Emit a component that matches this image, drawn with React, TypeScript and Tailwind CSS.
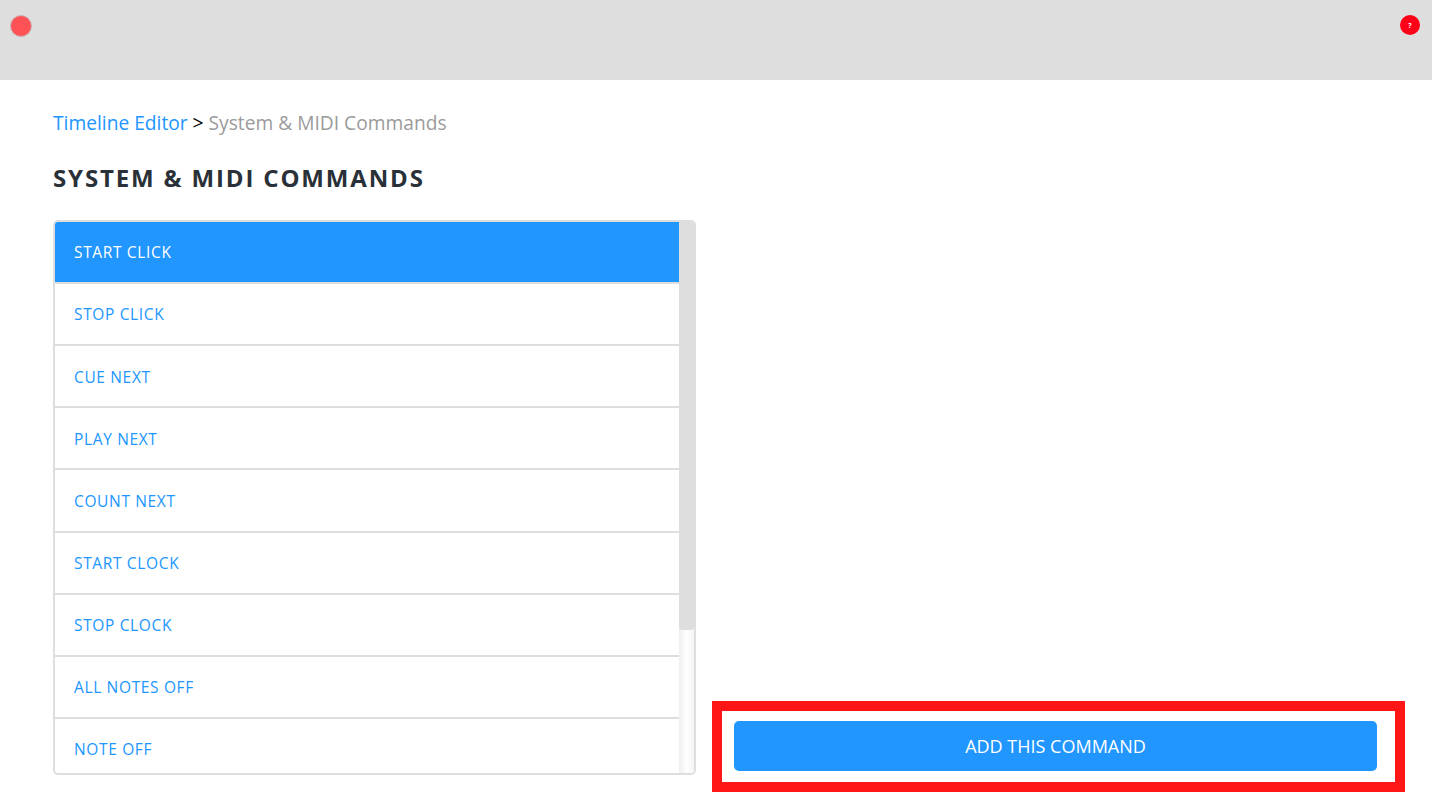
import React from 'react'

const commands = [
  'START CLICK',
  'STOP CLICK',
  'CUE NEXT',
  'PLAY NEXT',
  'COUNT NEXT',
  'START CLOCK',
  'STOP CLOCK',
  'ALL NOTES OFF',
  'NOTE OFF',
]

export default function App() {
  return (
    <div className="h-screen overflow-hidden bg-white font-['Open_Sans',sans-serif]">
      <div className="h-20 bg-[#dedede] flex items-start justify-between pl-[10px] pr-[12px]">
        <div className="mt-[15px] w-[22px] h-[22px] rounded-full bg-[#ff5257] border border-[#c9b4b4]" />
        <div className="mt-[15px] w-5 h-5 rounded-full bg-[#ff0018] flex items-center justify-center text-white text-[7px] font-bold leading-none">
          ?
        </div>
      </div>

      <div className="pl-[53px]">
        <div className="pt-[29px] h-[56px] text-[19.2px] leading-[27px] text-[#9b9b9b] whitespace-nowrap">
          <a className="text-[#2196ff]">Timeline Editor</a>
          <span className="text-black"> &gt; </span>
          System &amp; MIDI Commands
        </div>

        <h1 className="mt-[25px] h-[33px] text-[24px] leading-[33px] font-bold tracking-[1.85px] text-[#2a3038]">
          SYSTEM &amp; MIDI COMMANDS
        </h1>

        <div className="mt-[26px] flex h-[572px]">
          <div className="relative w-[643px] h-[555px] border-2 border-[#dedede] rounded-[5px] overflow-hidden flex">
            <div className="flex-1 min-w-0 overflow-hidden">
              {commands.map((name, i) => (
                <div
                  key={name}
                  className={
                    i === 0
                      ? 'h-[60px] mb-[2px] pt-[2px] px-[19px] flex items-center text-[15.5px] tracking-[0.65px] bg-[#2196ff] text-white shadow-[0_2px_0_#dedede]'
                      : 'h-[60.125px] mb-[2px] pt-[2px] px-[19px] flex items-center text-[15.5px] tracking-[0.65px] text-[#2196ff] shadow-[0_2px_0_#dedede] last:shadow-none'
                  }
                >
                  {name}
                </div>
              ))}
            </div>
            <div className="w-[15px] shrink-0 bg-gradient-to-r from-[#efefef] via-white to-[#f4f4f4]">
              <div className="h-[408px] bg-[#dedede] rounded-b-[3px]" />
            </div>
          </div>

          <div className="ml-4 self-end w-[693px] h-[91px] border-[10px] border-[#ff1717] pl-3 pr-[18px] pt-[10px]">
            <button className="w-full h-[50px] rounded-[5px] bg-[#2196ff] text-white text-[18px] font-medium leading-[50px]">
              ADD THIS COMMAND
            </button>
          </div>
        </div>
      </div>
    </div>
  )
}
